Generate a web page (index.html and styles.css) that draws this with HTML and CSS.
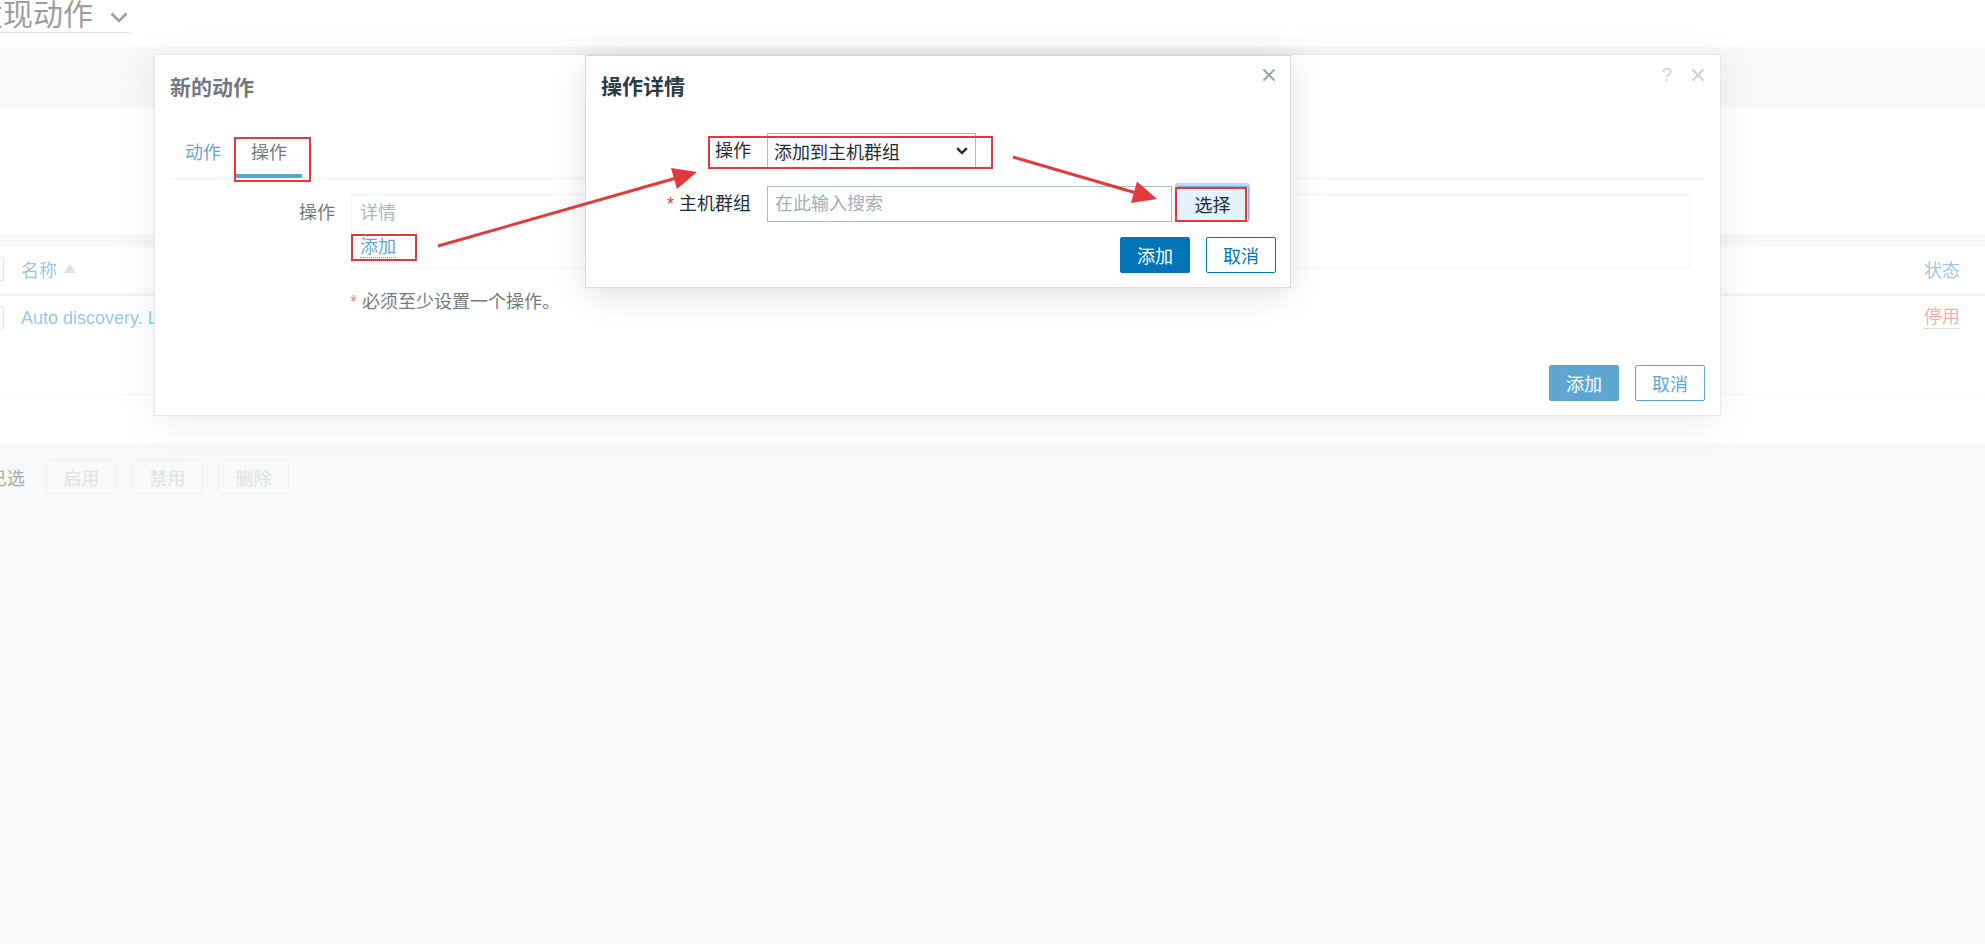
FILE: index.html
```html
<!DOCTYPE html>
<html lang="zh">
<head>
<meta charset="utf-8">
<title>自动发现动作</title>
<link rel="stylesheet" href="styles.css">
</head>
<body>
<div class="page">
  <header class="hdr">
    <h1 class="ttl"><span>自动发现动作</span><svg class="ttl-chev" width="18" height="11" viewBox="0 0 18 11"><polyline points="1.5,1.5 9,9 16.5,1.5" fill="none" stroke="currentColor" stroke-width="2.6"/></svg></h1>
  </header>
  <div class="band"></div>
  <div class="filter"></div>
  <div class="list">
    <div class="lrow lhead">
      <span class="cb"></span>
      <a class="sort">名称<i class="tri"></i></a>
      <a class="sort st-h">状态</a>
    </div>
    <div class="lrow lbody">
      <span class="cb"></span>
      <a class="lnk">Auto discovery. Linux servers.</a>
      <a class="st-off">停用</a>
    </div>
    <div class="paging"></div>
  </div>
  <div class="actions">
    <span class="sel-count">0 已选</span>
    <button class="btn-dis" disabled>启用</button>
    <button class="btn-dis" disabled>禁用</button>
    <button class="btn-dis" disabled>删除</button>
  </div>
</div>

<div class="veil"></div>

<div class="dlg dlg-outer">
  <div class="dlg-head">
    <h4 class="dlg-title">新的动作</h4>
    <div class="head-ctrls">
      <span class="help">?</span>
      <svg class="x-ico" width="14" height="14" viewBox="0 0 14 14"><path d="M1.5 1.5 L12.5 12.5 M12.5 1.5 L1.5 12.5" stroke="currentColor" stroke-width="2.2" fill="none"/></svg>
    </div>
  </div>
  <div class="tabs">
    <a class="tab">动作</a>
    <a class="tab tab-on">操作</a>
  </div>
  <div class="frow">
    <label class="flabel">操作</label>
    <div class="ops-box">
      <div class="ops-head">详情</div>
      <div class="ops-add"><a class="dot-link">添加</a></div>
    </div>
  </div>
  <div class="frow warn-row">
    <span></span>
    <div class="warn"><span class="req">*</span> 必须至少设置一个操作。</div>
  </div>
  <div class="dlg-foot">
    <button class="btn btn-pri">添加</button>
    <button class="btn btn-alt">取消</button>
  </div>
</div>

<div class="veil"></div>

<div class="dlg dlg-inner">
  <div class="dlg-head">
    <h4 class="dlg-title dark">操作详情</h4>
    <svg class="x-ico x-inner" width="14" height="14" viewBox="0 0 14 14"><path d="M1.5 1.5 L12.5 12.5 M12.5 1.5 L1.5 12.5" stroke="currentColor" stroke-width="2.2" fill="none"/></svg>
  </div>
  <div class="iform">
    <div class="irow">
      <label class="ilabel">操作</label>
      <div class="select"><span>添加到主机群组</span><svg width="12" height="8" viewBox="0 0 12 8"><polyline points="1.2,1.2 6,6 10.8,1.2" fill="none" stroke="#1f2c33" stroke-width="2.4"/></svg></div>
    </div>
    <div class="irow irow2">
      <label class="ilabel"><span class="req">*</span> 主机群组</label>
      <div class="ms">
        <div class="ms-input">在此输入搜索</div>
        <button class="btn-sel">选择</button>
      </div>
    </div>
  </div>
  <div class="dlg-foot">
    <button class="btn btn-pri">添加</button>
    <button class="btn btn-alt">取消</button>
  </div>
</div>

<svg class="annot" width="1985" height="944" viewBox="0 0 1985 944">
  <line x1="438" y1="246" x2="678" y2="177.5" stroke="#e23a3c" stroke-width="3"/>
  <polygon points="697,172 677,189 671,168" fill="#e23a3c"/>
  <line x1="1013" y1="157" x2="1138" y2="193.5" stroke="#e23a3c" stroke-width="3"/>
  <polygon points="1157,199 1131,203 1137,181.5" fill="#e23a3c"/>
</svg>
<div class="mark mark-tab"></div>
<div class="mark mark-add"></div>
<div class="mark mark-op"></div>
<div class="mark mark-sel"></div>
</body>
</html>
```

FILE: styles.css
```css
* { box-sizing: border-box; }

html, body {
  margin: 0;
  padding: 0;
}

body {
  width: 1985px;
  height: 944px;
  overflow: hidden;
  position: relative;
  background: #ebeef0;
  font-family: "Liberation Sans", "Noto Sans CJK SC", sans-serif;
  font-size: 18px;
  color: #1f2c33;
}

a { cursor: pointer; }

/* ---------- page behind ---------- */
.hdr {
  height: 47px;
  background: #fff;
}

.ttl {
  margin: 0 0 0 -87px;
  display: inline-flex;
  align-items: center;
  font-size: 30px;
  font-weight: normal;
  line-height: 30px;
  padding-bottom: 2px;
  border-bottom: 1px dotted #5d6f78;
  color: #0a0f12;
}

.ttl-chev {
  margin-left: 17px;
  margin-right: 2px;
  margin-top: 4px;
  color: #0a0f12;
}

.band { height: 60px; }

.filter {
  height: 127px;
  background: #fff;
}

.list { margin-top: 13px; }

.lrow {
  display: grid;
  grid-template-columns: 24px 1fr auto;
  column-gap: 17px;
  background: #fff;
  margin-left: -20px;
  padding-right: 25px;
}

.lhead {
  height: 49px;
  align-items: center;
  border-bottom: 3px solid #dfe4e7;
  padding-bottom: 3px;
}

.lbody {
  height: 99px;
  align-items: start;
  padding-top: 10px;
  border-bottom: 1px solid #ebeef0;
  line-height: 24px;
}

.cb {
  width: 24px;
  height: 24px;
  border: 1px solid #acbbc2;
  border-radius: 2px;
  background: #fff;
}

.sort {
  color: #0275b8;
  display: inline-flex;
  align-items: center;
}

.tri {
  width: 0;
  height: 0;
  margin-left: 7px;
  border-left: 6px solid transparent;
  border-right: 6px solid transparent;
  border-bottom: 9px solid #acbbc2;
}

.lnk { color: #0275b8; }

.st-off {
  color: #e33734;
  border-bottom: 1px dotted #e33734;
  line-height: 22px;
  align-self: start;
}

.paging {
  height: 48px;
  background: #fff;
}

.actions {
  display: flex;
  align-items: center;
  gap: 15px;
  padding-top: 16px;
}

.sel-count {
  margin-left: -26px;
  margin-right: 6px;
  color: #1f2c33;
}

.btn-dis {
  width: 71px;
  height: 35px;
  font: inherit;
  color: #acbbc2;
  background: transparent;
  border: 1px solid #d3dadf;
  border-radius: 3px;
}

/* ---------- overlays ---------- */
.veil {
  position: absolute;
  inset: 0;
  background: rgba(255, 255, 255, 0.36);
}

.dlg {
  position: absolute;
  background: #fff;
  border: 1px solid #d5dce0;
  box-shadow: 0 6px 36px rgba(0, 0, 0, 0.13);
  display: flex;
  flex-direction: column;
}

.dlg-outer {
  left: 154px;
  top: 54px;
  width: 1567px;
  height: 362px;
  padding: 0 15px 14px;
}

.dlg-inner {
  left: 585px;
  top: 55px;
  width: 706px;
  height: 233px;
  padding: 0 14px 14px 15px;
}

.dlg-head {
  display: flex;
  justify-content: space-between;
  align-items: flex-start;
  padding-top: 19px;
}

.dlg-inner .dlg-head { padding-top: 17px; }

.dlg-title {
  margin: 0;
  font-size: 21px;
  line-height: 28px;
  font-weight: bold;
  color: #1f2c33;
}

.dlg-title.dark { color: #2b3a42; }

.head-ctrls {
  display: flex;
  align-items: center;
  gap: 19px;
  margin-top: -10px;
  height: 22px;
}

.help {
  font-size: 19px;
  line-height: 22px;
  color: #acbbc2;
}

.x-ico {
  color: #acbbc2;
  display: block;
}

.x-inner {
  color: #9aa8af;
  margin-top: -5px;
  margin-right: 0;
}

.tabs {
  display: flex;
  margin-top: 28px;
  border-bottom: 1px solid #ebeef0;
}

.tab {
  padding: 10px 15px 7px;
  line-height: 27px;
  border-bottom: 4px solid transparent;
  color: #0275b8;
}

.tab-on {
  color: #1f2c33;
  border-bottom-color: #0275b8;
}

.frow {
  display: grid;
  grid-template-columns: 165px 1fr;
  column-gap: 16px;
  margin-top: 15px;
  margin-right: 15px;
}

.flabel {
  text-align: right;
  padding-top: 7px;
  line-height: 24px;
}

.ops-box {
  border: 1px solid #ebeef0;
  padding: 6px 8px 8px;
  line-height: 24px;
}

.ops-head { color: #768d99; }

.ops-add { margin-top: 10px; }

.dot-link {
  color: #0275b8;
  border-bottom: 1px dotted #0275b8;
}

.warn-row { margin-top: 22px; }

.warn {
  line-height: 24px;
  margin-left: -1px;
}

.req { color: #e33734; }

.dlg-foot {
  margin-top: auto;
  display: flex;
  justify-content: flex-end;
  gap: 16px;
}

.btn {
  width: 70px;
  height: 36px;
  font: inherit;
  border-radius: 2px;
  padding: 0;
}

.btn-pri {
  background: #0275b8;
  color: #fff;
  border: 1px solid #0275b8;
}

.btn-alt {
  background: #fff;
  color: #0275b8;
  border: 1px solid #0275b8;
}

/* inner form */
.iform { margin-top: 32px; }

.irow {
  display: grid;
  grid-template-columns: 150px 1fr;
  column-gap: 16px;
  align-items: center;
}

.irow2 { margin-top: 17px; }

.ilabel {
  text-align: right;
  line-height: 36px;
  color: #1f2c33;
}

.select {
  width: 209px;
  height: 36px;
  border: 1px solid #acbbc2;
  padding: 0 7px 0 6px;
  display: flex;
  align-items: center;
  justify-content: space-between;
  color: #1f2c33;
}

.ms {
  display: flex;
  align-items: center;
}

.ms-input {
  width: 405px;
  height: 36px;
  border: 1px solid #acbbc2;
  padding: 0 7px;
  line-height: 34px;
  color: #a2adb3;
}

.btn-sel {
  margin-left: 4px;
  width: 73px;
  height: 36px;
  font: inherit;
  color: #1f2c33;
  background: #e5f1fb;
  border: 1px solid #7eb4ea;
  border-radius: 2px;
  box-shadow: 0 -2px 0 1px #b9d7f4;
}

/* annotations */
.annot {
  position: absolute;
  left: 0;
  top: 0;
  pointer-events: none;
}

.mark {
  position: absolute;
  border: 2px solid #e23a3c;
}

.mark-tab { left: 234px; top: 137px; width: 77px; height: 45px; }
.mark-add { left: 351px; top: 234px; width: 66px; height: 27px; }
.mark-op  { left: 708px; top: 136px; width: 285px; height: 33px; }
.mark-sel { left: 1175px; top: 187px; width: 72px; height: 35px; }
```
